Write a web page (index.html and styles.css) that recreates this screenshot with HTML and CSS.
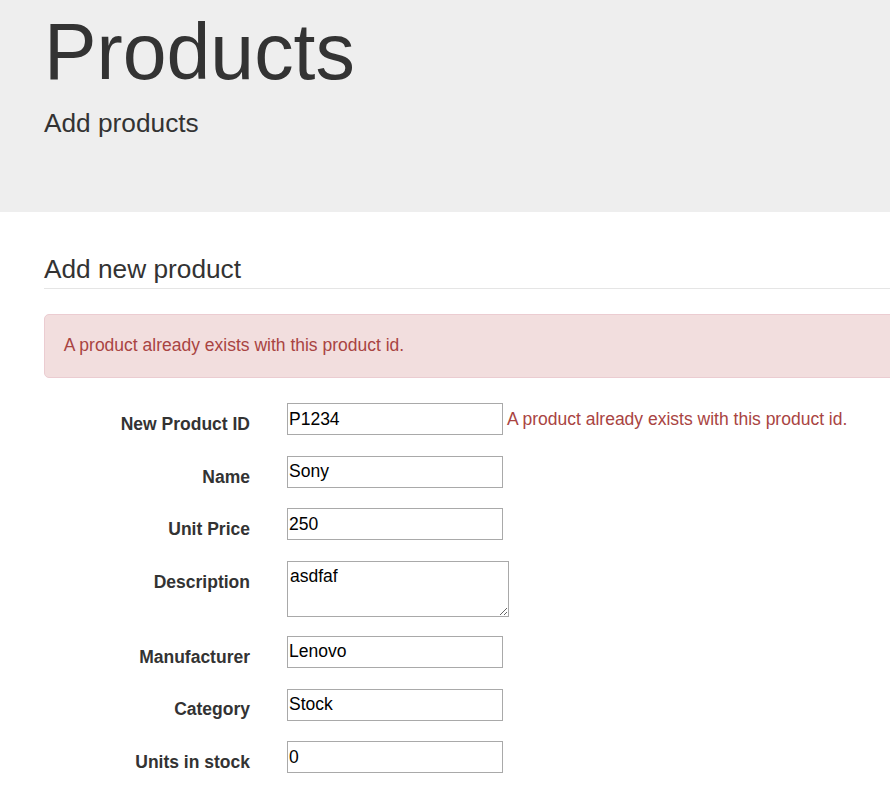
FILE: index.html
```html
<!DOCTYPE html>
<html lang="en">
<head>
<meta charset="utf-8">
<title>Products</title>
<link rel="stylesheet" href="styles.css">
</head>
<body>
<section class="jumbotron">
  <div class="container">
    <h1>Products</h1>
    <p>Add products</p>
  </div>
</section>
<section class="container main">
  <form class="form-horizontal">
    <fieldset>
      <legend>Add new product</legend>
      <div class="alert">A product already exists with this product id.</div>

      <div class="form-group">
        <label class="control-label" for="productId">New Product ID</label>
        <div class="field">
          <input id="productId" type="text" value="P1234"> <span class="error">A product already exists with this product id.</span>
        </div>
      </div>

      <div class="form-group">
        <label class="control-label" for="name">Name</label>
        <div class="field"><input id="name" type="text" value="Sony"></div>
      </div>

      <div class="form-group">
        <label class="control-label" for="unitPrice">Unit Price</label>
        <div class="field"><input id="unitPrice" type="text" value="250"></div>
      </div>

      <div class="form-group">
        <label class="control-label" for="description">Description</label>
        <div class="field"><textarea id="description" rows="2">asdfaf</textarea></div>
      </div>

      <div class="form-group">
        <label class="control-label" for="manufacturer">Manufacturer</label>
        <div class="field"><input id="manufacturer" type="text" value="Lenovo"></div>
      </div>

      <div class="form-group">
        <label class="control-label" for="category">Category</label>
        <div class="field"><input id="category" type="text" value="Stock"></div>
      </div>

      <div class="form-group">
        <label class="control-label" for="unitsInStock">Units in stock</label>
        <div class="field"><input id="unitsInStock" type="text" value="0"></div>
      </div>
    </fieldset>
  </form>
</section>
</body>
</html>
```

FILE: styles.css
```css
html, body {
  overflow: hidden;
}

body {
  margin: 0;
  font-family: "Liberation Sans", Arial, Helvetica, sans-serif;
  font-size: 17.5px;
  line-height: 25px;
  color: #333;
  background: #fff;
}

.container {
  box-sizing: border-box;
  width: 1462px;
  margin-left: 25px;
  padding: 0 19px;
}

.jumbotron {
  background: #eee;
  padding: 9px 0 69.5px;
}

.jumbotron h1 {
  margin: 0 0 9.5px;
  font-size: 78.75px;
  line-height: 1.1;
  font-weight: 500;
}

.jumbotron p {
  margin: 0;
  font-size: 26.25px;
  line-height: 37.5px;
  font-weight: 300;
}

.main {
  margin-top: 38.5px;
}

fieldset {
  margin: 0;
  padding: 0;
  border: 0;
  min-width: 0;
}

legend {
  display: block;
  width: 100%;
  padding: 0;
  margin-bottom: 24.5px;
  font-size: 26.25px;
  line-height: 37.5px;
  color: #333;
  border: 0;
  border-bottom: 1px solid #e5e5e5;
}

.alert {
  padding: 18.75px;
  margin-bottom: 25px;
  border: 1px solid #ebccd1;
  border-radius: 5px;
  background: #f2dede;
  color: #a94442;
}

.form-group {
  display: grid;
  grid-template-columns: 243px 1fr;
  margin: 0 -19px 18.9px;
}

.control-label {
  padding: 8.75px 18px 0 19px;
  text-align: right;
  font-weight: bold;
}

.field {
  padding: 0 19px;
}

input {
  box-sizing: border-box;
  width: 216px;
  height: 32px;
  padding: 1px 1px;
  border: 1px solid #a9a9a9;
  border-radius: 0;
  font-family: inherit;
  font-size: 17.5px;
  color: #000;
  background: #fff;
}

textarea {
  display: block;
  box-sizing: border-box;
  width: 222px;
  height: 56px;
  padding: 2px;
  margin: 0;
  border: 1px solid #a9a9a9;
  border-radius: 0;
  font-family: inherit;
  font-size: 17.5px;
  line-height: 25px;
  color: #000;
  background: #fff;
}

.error {
  color: #a94442;
}
```
